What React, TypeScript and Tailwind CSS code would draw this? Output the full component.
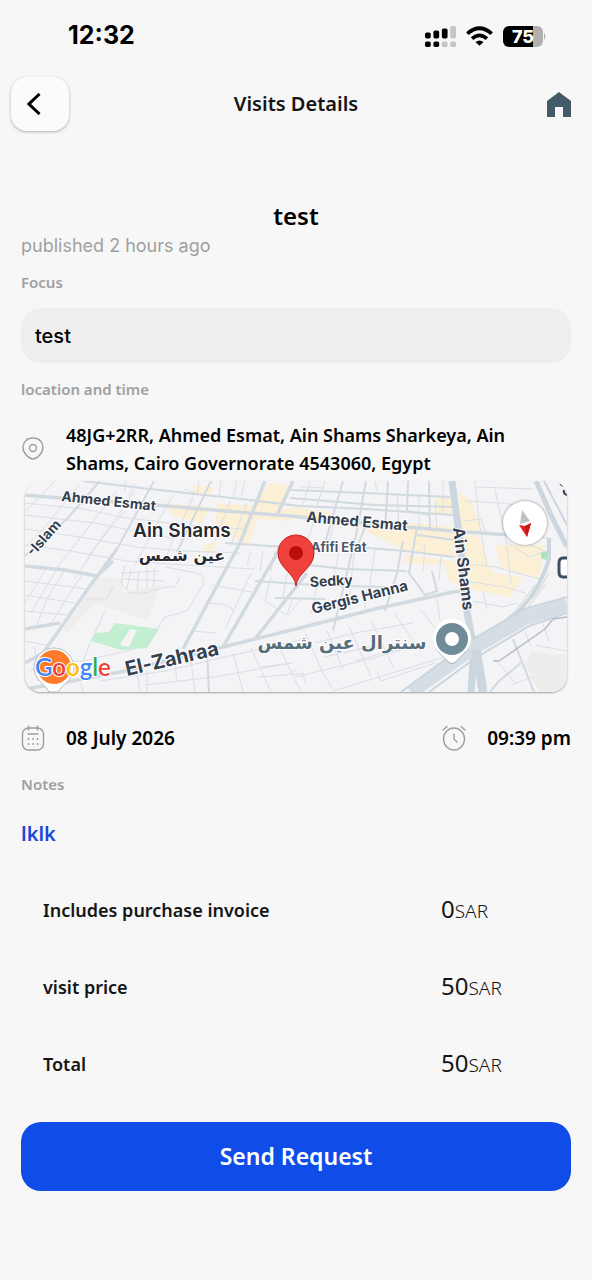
import { useState } from "react";
import type { ReactNode } from "react";

const FONT = "font-['Noto_Sans',sans-serif]";

const majorRoads = [
  "M0 14 L60 19 L130 24 L200 30 L265 35 L380 46 L428 50 L498 55",
  "M0 208 L42 201 L100 190 L198 166 L275 147 L350 128 L428 111 L442 109",
  "M92 68 L60 112 L35 148 L18 172 L0 182",
  "M0 148 L35 142",
  "M240 0 L215 62 L158 168",
  "M258 62 L198 166",
  "M282 92 L230 158",
  "M268 0 L252 34",
  "M0 85 L40 89 L72 95 L88 80",
];

const mediumRoads = [
  "M129 0 L92 68",
  "M186 0 L152 71",
  "M392 46 L384 92 L400 114 L412 110 L407 90",
  "M182 172 L184 211",
  "M465 211 L474 200 L496 182",
  "M488 158 L509 211",
  "M58 0 L125 8 L198 16 L275 25 L340 28 L428 34",
  "M75 0 L42 38 L0 75",
  "M265 9 L340 12 L425 16",
  "M265 17 L350 24 L430 26",
  "M341 0 L332 50 L308 150",
  "M318 0 L300 62",
  "M363 0 L360 48",
  "M383 0 L382 30 L405 34",
  "M404 0 L405 48",
  "M200 62 L260 66 L290 68",
  "M265 82 L320 88 L382 90",
  "M230 100 L290 104 L360 106",
  "M250 117 L300 118",
  "M378 60 L372 92 L360 130",
  "M340 46 L332 66 L380 70 L430 76",
  "M392 54 L438 60",
];

const minorRoads = [
  "M302 150 L318 188",
  "M324 145 L346 196",
  "M346 139 L368 186",
  "M370 133 L395 170",
  "M395 128 L420 160",
  "M412 118 L415 140",
  "M226 167 L246 211",
  "M252 162 L276 211",
  "M280 152 L298 192 L308 208",
  "M112 192 L115 211",
  "M56 202 L58 211",
  "M122 190 L122 211",
  "M75 200 L140 190 L200 176 L280 158",
  "M308 210 L420 176 L440 162",
  "M270 196 L345 178 L400 162",
  "M120 204 L190 196 L260 183",
  "M500 55 L524 57",
  "M450 6 L508 8",
  "M100 30 L70 66 L50 98",
  "M140 86 L172 92 Q182 96 177 106 L162 130 L140 136 L126 158",
  "M0 22 L58 28 L96 36 L160 44 L218 48",
  "M0 34 L70 42 L120 52 L150 58",
  "M0 48 L55 56 L112 66 L160 70 L215 72",
  "M0 64 L45 70 L102 80 L160 84 L230 88",
  "M0 100 L62 108",
  "M0 114 L50 122",
  "M0 130 L42 134",
  "M30 0 L5 26 L0 30",
  "M54 4 L20 46 L0 66",
  "M92 10 L62 48 L34 84 L6 132",
  "M110 10 L80 52 L62 80",
  "M148 14 L128 50 L110 84",
  "M168 18 L148 58 L138 84",
  "M205 20 L190 60",
  "M222 22 L205 66",
  "M40 88 L22 118 L10 148",
  "M58 92 L35 128 L24 146",
  "M22 86 L0 122",
  "M160 8 L170 12 L164 22",
  "M100 0 L100 10 M110 3 L104 16",
  "M212 0 L208 18 M220 0 L216 16",
  "M196 0 L194 16 M174 0 L172 13",
  "M285 0 L278 24 M300 0 L292 24",
  "M290 36 L282 62 M310 38 L302 68",
  "M276 6 L300 7 M350 0 L352 10 M372 12 L374 46 M394 12 L394 48",
  "M418 0 L418 34 M410 20 L412 48",
  "M450 0 L454 40 L462 86",
  "M470 8 L474 28 L480 52 L486 102",
  "M440 20 L476 22 L490 24",
  "M440 40 L456 38 L460 50",
  "M436 82 L470 86 L515 98",
  "M440 100 L480 106 L500 112",
  "M480 60 L505 76 L520 70 L500 62",
  "M100 84 L96 102 L104 112 L120 112 L140 106 L150 106 L155 96",
  "M106 88 L102 108 M114 90 L112 110 M122 88 L122 108 M130 88 L128 106",
  "M98 98 L140 100 M96 92 L134 90",
  "M60 118 L82 118 L88 106",
  "M80 130 L66 160 L58 180",
  "M180 122 L198 123 L208 128",
  "M168 150 L190 152",
  "M186 104 L210 108 L232 112",
  "M226 92 L200 148",
  "M246 96 L240 120 L262 134 L268 116",
  "M262 92 L258 116 M276 118 L262 136",
  "M238 70 L235 90 M250 70 L246 90 M226 70 L222 84",
  "M330 66 L326 100 M350 68 L344 110 M314 68 L308 102",
  "M292 104 L286 132 M326 108 L320 130 M342 108 L340 128",
  "M400 64 L398 90 M416 74 L414 100",
  "M290 162 L330 152 L388 142",
  "M300 176 L352 164",
  "M330 180 L380 166 M352 190 L356 200 L410 182",
  "M236 186 L268 182 M232 196 L262 194 L272 188",
  "M265 194 L278 192 L280 202",
  "M208 172 L218 211 M150 184 L152 200 M166 180 L170 211",
  "M0 160 L20 164 M4 190 L28 182 L58 180 L110 168",
  "M10 166 L12 200 M22 172 L24 192",
  "M510 164 L542 170 M516 138 L524 160 M500 150 L506 166",
  "M470 178 L492 204 M486 204 L508 196",
  "M458 110 L462 128 M448 120 L478 126 L492 122",
];

const blocks = [
  "M138 22 L186 26 L176 42 L150 36 Z",
  "M170 4 L190 6 L184 16 L168 12 Z",
  "M192 22 L270 28 L266 40 L232 38 L224 64 L190 48 Z",
  "M228 24 L244 2 L262 4 L258 30 Z",
  "M265 26 L300 30 L330 42 L300 38 L265 34 Z",
  "M330 36 L428 46 L432 76 L382 70 L340 50 Z",
  "M410 16 L428 18 L428 34 L410 34 Z",
  "M434 10 L446 20 L458 52 L436 50 Z",
  "M436 54 L452 54 L468 92 L498 96 L486 116 L444 108 Z",
  "M378 74 L430 80 L436 104 L424 100 L420 84 L380 82 Z",
  "M470 64 L520 64 L514 98 L476 86 Z",
  "M180 64 L192 60 L188 72 L178 70 Z",
];

const GOOGLE = [
  ["G", "#4285f4"],
  ["o", "#ea4335"],
  ["o", "#fbbc05"],
  ["g", "#4285f4"],
  ["l", "#34a853"],
  ["e", "#ea4335"],
];

const MapPreview = () => (
  <svg
    viewBox="0 0 542 211"
    preserveAspectRatio="xMidYMid slice"
    className="block w-full h-[211px]"
    role="img"
    aria-label="Map of Ain Shams"
  >
    <rect width="542" height="211" fill="#f4f3f5" />
    <g fill="#fbf0d6">
      {blocks.map((d) => (
        <path key={d} d={d} />
      ))}
    </g>
    <path d="M74 96 L98 98 L98 112 L135 104 L122 140 L70 122 L42 152 L38 148 Z" fill="#efeeed" />
    <path d="M506 171 L542 174 V211 H514 L500 184 Z" fill="#eeedeb" />
    <path d="M90 142 L134 148 L122 167 L96 169 L66 160 L70 152 L84 151 Z" fill="#c2efd1" />
    <path d="M105 148 L112 149 L104 166 L95 164 Z" fill="#f4f3f5" />
    <path d="M516 71 L524 70 V80 L516 77 Z" fill="#a9e4bf" />

    <g fill="none" stroke="#d8dfe5" strokeWidth="1">
      {minorRoads.map((d) => (
        <path key={d} d={d} />
      ))}
    </g>
    <g fill="none" stroke="#d1dae0" strokeWidth="2">
      {mediumRoads.map((d) => (
        <path key={d} d={d} />
      ))}
    </g>
    <g fill="none" stroke="#d0dae0" strokeWidth="3.4" strokeLinejoin="round">
      {majorRoads.map((d) => (
        <path key={d} d={d} />
      ))}
    </g>

    {/* Ain Shams street, ring road and the railway */}
    <g fill="none" stroke="#cbd6de">
      <path d="M427 0 L435 61 L442 131 L449 168 L446 211" strokeWidth="7" />
      <path d="M511 0 L526 34 L542 66" strokeWidth="5" />
      <path d="M519 0 L542 44" strokeWidth="2" />
      <path d="M524 57 L524 78 Q516 106 496 128 L448 166" strokeWidth="4" />
      <path d="M386 211 L448 167 L500 137 L542 124" strokeWidth="14" stroke="#d5dee5" />
      <path d="M376 211 L448 158 L500 128 L542 116" strokeWidth="2" />
      <path d="M404 211 L452 176 L504 145 L542 132" strokeWidth="2" />
      <path d="M451 168 L458 211" strokeWidth="9" />
    </g>
    <path d="M468 180 L474 180 L520 148 L528 138 L542 136" fill="none" stroke="#b4bfcb" strokeWidth="1.5" />
    <path d="M488 136 L512 112 L524 92 M492 128 L510 104 M500 130 L520 104" fill="none" stroke="#d6d2cc" strokeWidth="1" />

    <g
      className="font-['Inter',sans-serif]"
      fill="#34404f"
      stroke="#fff"
      strokeWidth="2"
      strokeLinejoin="round"
      paintOrder="stroke"
      fontWeight="700"
      fontSize="14"
    >
      <text transform="translate(36 20) rotate(6)">Ahmed Esmat</text>
      <text transform="translate(281 41) rotate(5)" fontSize="15">Ahmed Esmat</text>
      <text transform="translate(8 76) rotate(-48)">-Islam</text>
      <text x="286" y="71" fontSize="13" fill="#4a586a">Afifi Efat</text>
      <text transform="translate(285 106) rotate(-3)">Sedky</text>
      <text transform="translate(288 133) rotate(-14)" fontSize="15">Gergis Hanna</text>
      <text transform="translate(428 47) rotate(83)" fontSize="16">Ain Shams</text>
      <text transform="translate(102 195) rotate(-13)" fontSize="20">El-Zahraa</text>
      <text x="108" y="56" fontSize="19" fontWeight="600" fill="#26292e">Ain Shams</text>
    </g>
    <g
      className="font-['DejaVu_Sans',sans-serif]"
      stroke="#fff"
      strokeWidth="2"
      strokeLinejoin="round"
      paintOrder="stroke"
      fontWeight="700"
      textAnchor="middle"
    >
      <text x="157" y="80" fontSize="16" fill="#26292e">عين شمس</text>
      <text x="317" y="168" fontSize="18" fill="#546e7a">سنترال عين شمس</text>
    </g>

    <path d="M542 77 H538 Q534 77 534 82 V91 Q534 96 538 96 H542" fill="#fff" stroke="#3e4e60" strokeWidth="3" />
    <path d="M535 3 L538 5 M539 9 Q538 13 542 14" fill="none" stroke="#34404f" strokeWidth="2" />

    {/* selected place */}
    <path d="M271 105 C270 92 253 87 253 72 A18 18 0 0 1 289 72 C289 87 272 92 271 105 Z" fill="#f0413c" stroke="#c5221f" strokeWidth="1" />
    <circle cx="271" cy="72" r="7" fill="#b80f0a" />

    {/* exchange building */}
    <path d="M427 140 A19 19 0 0 1 440 172 L431 181 Q427 185 423 181 L414 172 A19 19 0 0 1 427 140 Z" fill="#8b939a" opacity="0.6" />
    <path d="M427 138 A19 19 0 0 1 440 171 L431 180 Q427 184 423 180 L414 171 A19 19 0 0 1 427 138 Z" fill="#fff" />
    <circle cx="427" cy="158" r="16" fill="#718b98" />
    <circle cx="427" cy="158" r="7" fill="#fff" />

    {/* Google attribution */}
    <path d="M9 187 A20 20 0 0 1 49 187 C49 198 38 203 33 211 H24 C20 203 9 198 9 187 Z" fill="#fff" stroke="#b9bcc0" strokeWidth="1" />
    <circle cx="29" cy="186" r="17" fill="#ff7b29" />
    <text
      x="10"
      y="195"
      className="font-['Lato',sans-serif]"
      fontSize="24"
      fontWeight="600"
      stroke="#fff"
      strokeWidth="2"
      strokeLinejoin="round"
      paintOrder="stroke"
    >
      {GOOGLE.map(([letter, color], i) => (
        <tspan key={i} fill={color}>
          {letter}
        </tspan>
      ))}
    </text>
  </svg>
);

const CompassIcon = () => (
  <svg viewBox="0 0 44 44" className="w-11 h-11" aria-hidden="true">
    <path d="M19 9 L27 20 L17 23 Z" fill="#bfc2c5" />
    <path d="M16 24 L22 25 L28 22 L24 36 Z" fill="#e3201b" />
    <path d="M22 25 L28 22 L24 36 Z" fill="#c5161a" />
  </svg>
);

const SignalIcon = () => (
  <svg viewBox="0 0 92 62" className="w-[31px] h-[21px]" aria-hidden="true">
    <rect x="0" y="19" width="17" height="18" rx="5" />
    <rect x="25" y="13" width="17" height="24" rx="5" />
    <rect x="50" y="7" width="17" height="30" rx="5" />
    <rect x="75" y="0" width="17" height="37" rx="5" fill="#c5c5c5" />
    <rect x="0" y="46" width="17" height="16" rx="5" />
    <rect x="25" y="46" width="17" height="16" rx="5" />
    <rect x="50" y="46" width="17" height="16" rx="5" fill="#c5c5c5" />
    <rect x="75" y="46" width="17" height="16" rx="5" fill="#c5c5c5" />
  </svg>
);

const WifiIcon = () => (
  <svg viewBox="0 0 80 58" className="w-[27px] h-5" aria-hidden="true">
    <g fill="none" stroke="#000" strokeWidth="11">
      <path d="M4 22 Q40 -10 76 22" />
      <path d="M18 37 Q40 17 62 37" />
    </g>
    <path d="M28 47 Q40 37 52 47 L40 58 Z" />
  </svg>
);

const BatteryIcon = () => (
  <svg viewBox="0 0 44 21" className="w-11 h-[21px]" role="img" aria-label="Battery 75%">
    <path d="M30 0 H34 A6 6 0 0 1 40 6 V15 A6 6 0 0 1 34 21 H30 Z" fill="#b0b0b0" />
    <path d="M6 0 H30 V21 H6 A6 6 0 0 1 0 15 V6 A6 6 0 0 1 6 0 Z" />
    <path d="M41 7 Q44 10 41 14 Z" fill="#b0b0b0" />
    <text x="20" y="17" textAnchor="middle" fill="#fff" fontSize="18" fontWeight="800" className="font-['Inter',sans-serif]">
      75
    </text>
  </svg>
);

const PinIcon = () => (
  <svg viewBox="0 0 24 24" className="w-6 h-6 shrink-0" fill="none" stroke="#9e9e9e" strokeWidth="1.400" aria-hidden="true">
    <path d="M12 1 C5.800 1 2 5 2 10.500 C2 16 8 22 12 22 C16 22 22 16 22 10.500 C22 5 18.200 1 12 1 Z" />
    <circle cx="12" cy="11" r="3.500" />
  </svg>
);

const CalendarIcon = () => (
  <svg viewBox="0 0 24 26" className="w-6 h-[26px] shrink-0" fill="none" stroke="#9e9e9e" strokeWidth="1.400" strokeLinecap="round" aria-hidden="true">
    <rect x="1.500" y="3" width="21" height="22" rx="6" />
    <path d="M7.500 1 V5 M16.500 1 V5 M7 9 H17" />
    <path d="M7.500 14 H7.600 M12 14 H12.100 M16.500 14 H16.600 M7.500 19 H7.600 M12 19 H12.100 M16.500 19 H16.600" strokeWidth="1.800" />
  </svg>
);

const AlarmIcon = () => (
  <svg viewBox="0 0 24 26" className="w-6 h-[26px] shrink-0" fill="none" stroke="#9e9e9e" strokeWidth="1.400" strokeLinecap="round" aria-hidden="true">
    <ellipse cx="12" cy="14" rx="10.500" ry="11" />
    <path d="M12 9 V14 L15 17" />
    <path d="M1 5 L5 1.500 M23 5 L19 1.500" />
  </svg>
);

const SectionLabel = ({ children, className = "" }: { children: ReactNode; className?: string }) => (
  <h2 className={`text-[15px] leading-6 font-semibold text-[#a0a0a0] ${className}`}>{children}</h2>
);

const prices = [
  { label: "Includes purchase invoice", amount: 0 },
  { label: "visit price", amount: 50 },
  { label: "Total", amount: 50 },
];

export default function App() {
  const [focus, setFocus] = useState("test");

  return (
    <div className={`min-h-screen bg-[#f7f7f7] text-black ${FONT}`}>
      <div className="flex h-[72px] items-center justify-between pl-[68px] pr-[45px]">
        <span className="font-['Inter',sans-serif] text-[25px] font-bold">12:32</span>
        <div className="flex items-center gap-2.5">
          <SignalIcon />
          <WifiIcon />
          <BatteryIcon />
        </div>
      </div>

      <header className="grid h-16 grid-cols-[1fr_auto_1fr] items-center px-[11px]">
        <button
          aria-label="Back"
          className="flex h-[54px] w-[58px] items-center rounded-2xl bg-[#fbfbfb] pl-4 shadow-[0_1px_3px_rgba(0,0,0,0.3)]"
        >
          <svg viewBox="0 0 14 22" className="h-[22px] w-3.5" fill="none" stroke="#000" strokeWidth="3" aria-hidden="true">
            <path d="M12.500 1 L2 11 L12.500 21" />
          </svg>
        </button>
        <h1 className="text-xl font-semibold text-[#151515]">Visits Details</h1>
        <button aria-label="Home" className="justify-self-end pr-2.5">
          <svg viewBox="0 0 24 25" className="h-[25px] w-6" fill="#435b66" aria-hidden="true">
            <path d="M12 0 L24 9 V25 H16 V15 H8 V25 H0 V9 Z" />
          </svg>
        </button>
      </header>

      <main className="px-[21px] pb-20">
        <h2 className="mt-16 text-center text-2xl leading-8 font-semibold">test</h2>
        <p className="font-['Inter',sans-serif] text-lg leading-7 text-[#a0a0a0]">published 2 hours ago</p>

        <label htmlFor="focus" className="mt-2.5 block text-[15px] leading-6 font-semibold text-[#a0a0a0]">
          Focus
        </label>
        <input
          id="focus"
          value={focus}
          onChange={(e) => setFocus(e.target.value)}
          className="mt-3.5 block h-[55px] w-full rounded-[20px] bg-[#eeeeee] px-3.5 font-['Inter',sans-serif] text-xl font-medium outline-none"
        />

        <SectionLabel className="mt-3.5">location and time</SectionLabel>
        <div className="mt-5 flex items-center gap-[21px]">
          <PinIcon />
          <p className="text-lg leading-7 font-semibold">
            48JG+2RR, Ahmed Esmat, Ain Shams Sharkeya, Ain Shams, Cairo Governorate 4543060, Egypt
          </p>
        </div>

        <div className="relative mx-1 mt-1 overflow-hidden rounded-2xl shadow-[0_1px_2px_rgba(0,0,0,0.35)]">
          <MapPreview />
          <button
            aria-label="Compass"
            className="absolute top-5 right-5 rounded-full bg-white shadow-[0_0_3px_rgba(0,0,0,0.45)]"
          >
            <CompassIcon />
          </button>
        </div>

        <div className="mt-8 flex items-center justify-between text-[19px] leading-7 font-semibold">
          <div className="flex items-center gap-[21px]">
            <CalendarIcon />
            <span>08 July 2026</span>
          </div>
          <div className="flex items-center gap-[21px]">
            <AlarmIcon />
            <span>09:39 pm</span>
          </div>
        </div>

        <SectionLabel className="mt-5">Notes</SectionLabel>
        <p className="mt-6 text-xl leading-7 font-semibold text-[#1749d6]">lklk</p>

        <dl className="mt-12 flex flex-col gap-[49px] pl-[22px]">
          {prices.map(({ label, amount }) => (
            <div key={label} className="flex h-7 items-center justify-between">
              <dt className="text-lg font-semibold text-[#151515]">{label}</dt>
              <dd className="w-[130px] text-2xl leading-7 text-[#151515]">
                {amount}
                <span className="text-[19px] font-light">SAR</span>
              </dd>
            </div>
          ))}
        </dl>

        <button className="mt-11 h-[69px] w-full rounded-[20px] bg-[#0f4ce8] text-[23px] font-semibold text-white">
          Send Request
        </button>
      </main>
    </div>
  );
}
